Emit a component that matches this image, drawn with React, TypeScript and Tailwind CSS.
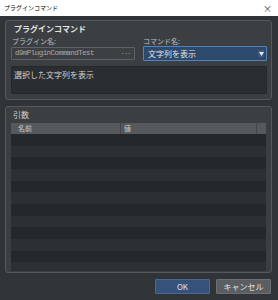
export default function App() {
  const rows = Array.from({ length: 12 });

  return (
    <div className="w-[278px] h-[300px] flex flex-col bg-[#303437] overflow-hidden font-['Noto_Sans_CJK_JP',sans-serif]">
      {/* title bar */}
      <div className="h-[16px] shrink-0 bg-white flex items-center justify-between pl-[4px] pr-[6px]">
        <span className="text-[6px] leading-none text-black">プラグインコマンド</span>
        <span className="text-[9px] leading-none text-[#333]">×</span>
      </div>

      <div className="flex flex-col pt-[4px] pl-[5px] pr-[6px] gap-[6px]">
        {/* plugin command group */}
        <div className="h-[80px] rounded-[3px] border border-[#55595c] bg-[#3b3f42] pl-[5px] pr-[4px] flex flex-col">
          <div className="pt-[2px] pl-[3px] text-[8px] leading-[11px] font-bold text-[#e4e4e4]">プラグインコマンド</div>
          <div className="flex gap-[8px] mt-[2px]">
            <div className="w-[125px] flex flex-col">
              <span className="pl-[1px] text-[7px] leading-[10px] text-[#bfc1c2]">プラグイン名:</span>
              <div className="mt-[1px] h-[13px] border border-[#5e6265] bg-[#3c4043] rounded-[1px] flex items-center justify-between px-[3px]">
                <span className="font-['Liberation_Mono',monospace] text-[7.5px] tracking-[-0.55px] text-[#a8aaab]">d9mPluginCommandTest</span>
                <span className="text-[7px] leading-none text-[#b0b0b0] tracking-[-0.5px]">···</span>
              </div>
            </div>
            <div className="w-[125px] flex flex-col">
              <span className="text-[7px] leading-[10px] text-[#bfc1c2]">コマンド名:</span>
              <div className="h-[15px] border border-[#4f83c0] bg-[#2d496b] rounded-[1px] flex items-center justify-between pl-[4px] pr-[2px]">
                <span className="text-[8px] leading-none text-[#e6e8ea]">文字列を表示</span>
                <span className="w-[6px] h-[7px] flex items-center justify-center bg-[#3d5a7e]">
                  <svg width="5" height="4" viewBox="0 0 5 4">
                    <path d="M0 0 L5 0 L2.5 4 Z" fill="#e8e8e8" />
                  </svg>
                </span>
              </div>
            </div>
          </div>
          <div className="mt-[5px] h-[28px] w-[256px] bg-[#2a2e31] border border-[#26292c] rounded-[1px] px-[2px] pt-[3px] text-[8px] leading-[10px] text-[#d2d4d5]">
            選択した文字列を表示
          </div>
        </div>

        {/* arguments group */}
        <div className="h-[167px] rounded-[3px] border border-[#55595c] bg-[#3b3f42] pl-[5px] pr-[5px] flex flex-col">
          <div className="pt-[2px] pl-[2px] text-[8px] leading-[11px] text-[#cfd1d2]">引数</div>
          <div className="mt-[3px] h-[148px] w-[255px] flex flex-col overflow-hidden bg-[#24282b]">
            <div className="h-[11px] shrink-0 bg-[#55595c] flex text-[7px] leading-[11px] text-[#c9cbcc]">
              <div className="w-[110px] border-r border-[#43474a] pl-[7px]">名前</div>
              <div className="w-[136px] border-r border-[#43474a] pl-[3px]">値</div>
              <div className="flex-1" />
            </div>
            {rows.map((_, i) => (
              <div
                key={i}
                className={`h-[11.67px] shrink-0 ${i % 2 === 0 ? 'bg-[#24282b]' : 'bg-[#2c3033]'}`}
              />
            ))}
          </div>
        </div>
      </div>

      {/* buttons */}
      <div className="flex justify-end gap-[6px] pr-[7px] pt-[6px]">
        <button className="w-[55px] h-[15px] bg-[#37527a] border border-[#4a6891] rounded-[1px] text-[8px] leading-none text-[#dfe3e8]">
          OK
        </button>
        <button className="w-[55px] h-[15px] bg-[#5a5e61] border border-[#6b6f72] rounded-[1px] text-[8px] leading-none text-[#e2e3e4]">
          キャンセル
        </button>
      </div>
    </div>
  );
}
